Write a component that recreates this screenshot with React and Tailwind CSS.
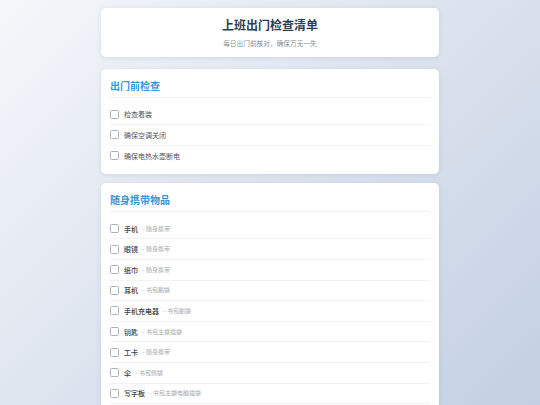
import { useState } from 'react';

const font = { fontFamily: '"Noto Sans CJK SC", "Noto Sans", sans-serif' };

const beforeLeave = ['检查着装', '确保空调关闭', '确保电热水壶断电'];

const carryItems = [
  { name: '手机', where: '随身携带' },
  { name: '眼镜', where: '随身携带' },
  { name: '纸巾', where: '随身携带' },
  { name: '耳机', where: '书包副袋' },
  { name: '手机充电器', where: '书包副袋' },
  { name: '钥匙', where: '书包主袋插袋' },
  { name: '工卡', where: '随身携带' },
  { name: '伞', where: '书包侧袋' },
  { name: '写字板', where: '书包主袋电脑插袋' },
];

function CheckRow({ label, where, last, bold }) {
  const [checked, setChecked] = useState(false);
  return (
    <label
      className={`flex items-center h-[20.6px] cursor-pointer ${last ? '' : 'border-b border-[#f0f2f4]'}`}
    >
      <input
        type="checkbox"
        checked={checked}
        onChange={() => setChecked(!checked)}
        className="appearance-none w-[9px] h-[9px] rounded-[1.5px] border border-[#aeb3b9] bg-white mr-[5px] shrink-0 checked:bg-[#3498db] checked:border-[#3498db]"
      />
      <span
        className={`text-[7px] leading-[10px] ${bold ? 'font-medium text-[#3a3f44]' : 'text-[#50565c]'} ${checked ? 'line-through opacity-50' : ''}`}
      >
        {label}
      </span>
      {where && (
        <span className="ml-[4.5px] text-[6px] leading-[10px] text-[#a4a9ae]">- {where}</span>
      )}
    </label>
  );
}

function Section({ title, children }) {
  return (
    <div className="bg-white rounded-[5px] shadow-[0_1px_5px_rgba(60,80,110,0.12)] px-[9px] pt-[10px] pb-[8px]">
      <h2 className="text-[10px] leading-[14px] font-bold text-[#3498db] pb-[4px] border-b border-[#eef0f2] mb-[6.5px]">
        {title}
      </h2>
      <div>{children}</div>
    </div>
  );
}

export default function App() {
  return (
    <div
      className="min-h-[405px] h-[405px] overflow-hidden bg-[linear-gradient(135deg,#f5f7fa_0%,#c3cfe2_100%)] pt-[8px]"
      style={font}
    >
      <div className="w-[338px] mx-auto">
        {/* Header */}
        <div className="bg-white rounded-[5px] shadow-[0_1px_5px_rgba(60,80,110,0.12)] pt-[10px] pb-[9px] text-center mb-[12px] h-[49px]">
          <h1 className="text-[12px] leading-[14px] font-bold text-[#2c3e50]">上班出门检查清单</h1>
          <p className="text-[6.7px] leading-[8px] text-[#8a9199] mt-[7px]">每日出门前核对，确保万无一失</p>
        </div>

        <div className="flex flex-col gap-[9px]">
          <Section title="出门前检查">
            {beforeLeave.map((item, i) => (
              <CheckRow key={item} label={item} last={i === beforeLeave.length - 1} />
            ))}
          </Section>

          <Section title="随身携带物品">
            {carryItems.map((item) => (
              <CheckRow key={item.name} label={item.name} where={item.where} bold />
            ))}
          </Section>
        </div>
      </div>
    </div>
  );
}
